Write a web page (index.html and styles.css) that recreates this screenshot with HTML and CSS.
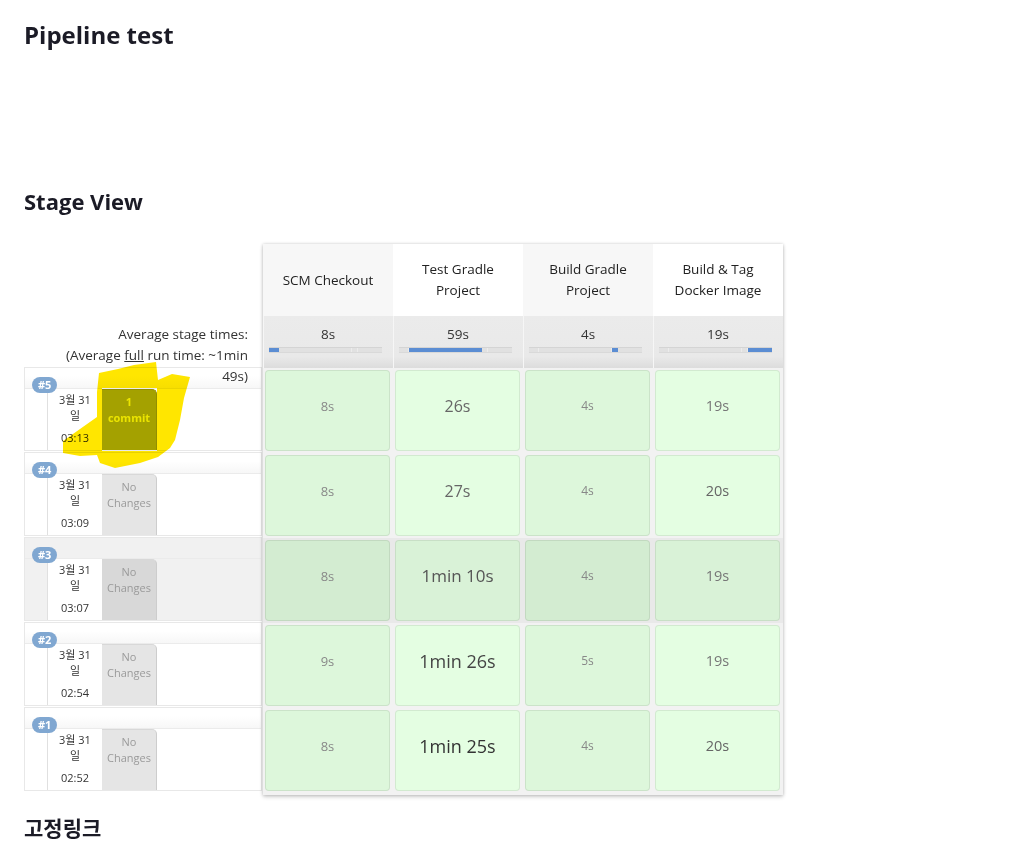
FILE: index.html
```html
<!DOCTYPE html>
<html lang="ko">
<head>
<meta charset="utf-8">
<title>Pipeline test</title>
<link rel="stylesheet" href="styles.css">
</head>
<body>
<h1 class="page-title">Pipeline test</h1>
<h2 class="section-title stage-title">Stage View</h2>
<div class="stage-view">
  <div class="runs">
    <div class="runs-head"></div>
    <div class="runs-avg">
      <div>Average stage times:</div>
      <div>(Average <u>full</u> run time: ~1min</div>
      <div>49s)</div>
    </div>
    <div class="run">
      <div class="run-top"><span class="badge">#5</span></div>
      <div class="run-body">
        <div class="run-date"><div class="date">3월 31<br>일</div><div class="time">03:13</div></div>
        <div class="changeset commit">1<br>commit</div>
      </div>
    </div>
    <div class="run">
      <div class="run-top"><span class="badge">#4</span></div>
      <div class="run-body">
        <div class="run-date"><div class="date">3월 31<br>일</div><div class="time">03:09</div></div>
        <div class="changeset">No<br>Changes</div>
      </div>
    </div>
    <div class="run hover">
      <div class="run-top"><span class="badge">#3</span></div>
      <div class="run-body">
        <div class="run-date"><div class="date">3월 31<br>일</div><div class="time">03:07</div></div>
        <div class="changeset">No<br>Changes</div>
      </div>
    </div>
    <div class="run">
      <div class="run-top"><span class="badge">#2</span></div>
      <div class="run-body">
        <div class="run-date"><div class="date">3월 31<br>일</div><div class="time">02:54</div></div>
        <div class="changeset">No<br>Changes</div>
      </div>
    </div>
    <div class="run">
      <div class="run-top"><span class="badge">#1</span></div>
      <div class="run-body">
        <div class="run-date"><div class="date">3월 31<br>일</div><div class="time">02:52</div></div>
        <div class="changeset">No<br>Changes</div>
      </div>
    </div>
  </div>

  <div class="stages">
    <div class="stage-row">
      <div class="stage-head odd">SCM Checkout</div>
      <div class="stage-head">Test Gradle Project</div>
      <div class="stage-head odd">Build Gradle Project</div>
      <div class="stage-head">Build &amp; Tag Docker Image</div>
    </div>
    <div class="stage-row">
      <div class="avg-cell">
        <div class="avg-time">8s</div>
        <div class="bar"><span class="seg on" style="width:10px"></span><span class="seg" style="width:73px"></span><span class="seg" style="width:6px"></span><span class="seg" style="width:24px"></span></div>
      </div>
      <div class="avg-cell">
        <div class="avg-time">59s</div>
        <div class="bar"><span class="seg" style="width:10px"></span><span class="seg on" style="width:73px"></span><span class="seg" style="width:6px"></span><span class="seg" style="width:24px"></span></div>
      </div>
      <div class="avg-cell">
        <div class="avg-time">4s</div>
        <div class="bar"><span class="seg" style="width:10px"></span><span class="seg" style="width:73px"></span><span class="seg on" style="width:6px"></span><span class="seg" style="width:24px"></span></div>
      </div>
      <div class="avg-cell">
        <div class="avg-time">19s</div>
        <div class="bar"><span class="seg" style="width:10px"></span><span class="seg" style="width:73px"></span><span class="seg" style="width:6px"></span><span class="seg on" style="width:24px"></span></div>
      </div>
    </div>

    <div class="stage-row build">
      <div class="cell"><div class="box ca t2">8s</div></div>
      <div class="cell"><div class="box cb t4">26s</div></div>
      <div class="cell"><div class="box ca t1">4s</div></div>
      <div class="cell"><div class="box cb t3">19s</div></div>
    </div>
    <div class="stage-row build">
      <div class="cell"><div class="box ca t2">8s</div></div>
      <div class="cell"><div class="box cb t4">27s</div></div>
      <div class="cell"><div class="box ca t1">4s</div></div>
      <div class="cell"><div class="box cb t3b">20s</div></div>
    </div>
    <div class="stage-row build hover">
      <div class="cell"><div class="box ca t2">8s</div></div>
      <div class="cell"><div class="box cb t5">1min 10s</div></div>
      <div class="cell"><div class="box ca t1">4s</div></div>
      <div class="cell"><div class="box cb t3">19s</div></div>
    </div>
    <div class="stage-row build">
      <div class="cell"><div class="box ca t2">9s</div></div>
      <div class="cell"><div class="box cb t6">1min 26s</div></div>
      <div class="cell"><div class="box ca t1">5s</div></div>
      <div class="cell"><div class="box cb t3">19s</div></div>
    </div>
    <div class="stage-row build">
      <div class="cell"><div class="box ca t2">8s</div></div>
      <div class="cell"><div class="box cb t7">1min 25s</div></div>
      <div class="cell"><div class="box ca t1">4s</div></div>
      <div class="cell"><div class="box cb t3b">20s</div></div>
    </div>
  </div>

  <svg class="scribble" width="152" height="112" viewBox="60 360 152 112" aria-hidden="true">
    <path fill-rule="evenodd" d="M99 373 L118 369 L134 365 L156 362 L158 380 L172 374 L190 377 L184 398 L180 420 L175 440 L170 448 L158 457 L140 463 L115 468 L100 463 L97 455 L80 456 L63 453 L63 441 L80 429 L97 417 L97 392 Z M102 388 L157 388 L157 451 L102 451 Z"/>
  </svg>
</div>
<h2 class="section-title link-title">고정링크</h2>
</body>
</html>
```

FILE: styles.css
```css
html, body {
  margin: 0;
  padding: 0;
  background: #fff;
}

body {
  padding: 0 24px;
  font-family: "Open Sans", "Noto Sans CJK KR", sans-serif;
  color: #333;
}

.page-title {
  margin: 19px 0 0;
  font-size: 24px;
  line-height: 32px;
  font-weight: 700;
  color: #1b1b26;
}

.section-title {
  margin: 0;
  font-size: 22px;
  line-height: 28px;
  font-weight: 700;
  color: #1b1b26;
}

.stage-title {
  margin-top: 136px;
}

.link-title {
  margin-top: 18px;
  font-family: "Noto Sans CJK KR", "Open Sans", sans-serif;
  font-size: 21px;
}

.stage-view {
  position: relative;
  display: flex;
  align-items: flex-start;
  margin-top: 29px;
}

/* left column */
.runs {
  width: 238px;
  flex: none;
}

.runs-head {
  height: 72px;
}

.runs-avg {
  height: 51px;
  box-sizing: border-box;
  padding: 8px 14px 0 0;
  text-align: right;
  font-size: 13.5px;
  line-height: 21px;
  color: #333;
  white-space: nowrap;
}

.run {
  height: 84px;
  box-sizing: border-box;
  border: 1px solid #e8e8e8;
  margin-bottom: 1px;
  background: #fff;
}

.run.hover {
  background: #f1f1f1;
}

.run-top {
  height: 20px;
  border-bottom: 1px solid #ebebeb;
  background: linear-gradient(#ffffff 40%, #f7f7f7);
}

.run.hover .run-top {
  background: none;
}

.badge {
  position: relative;
  z-index: 1;
  display: inline-block;
  margin: 9px 0 0 7px;
  height: 16px;
  padding: 0 6px;
  border-radius: 8px;
  background: #80a7d1;
  color: #fff;
  font-size: 11px;
  line-height: 16px;
  font-weight: 700;
}

.run-body {
  display: flex;
  height: 61px;
  margin-left: 22px;
}

.run-date {
  width: 55px;
  box-sizing: border-box;
  border-left: 1px solid #e0e0e0;
  background: #fff;
  text-align: center;
  font-size: 11px;
  line-height: 16px;
  padding-top: 3px;
  color: #333;
}

.run-date .time {
  margin-top: 6px;
}

.changeset {
  width: 55px;
  box-sizing: border-box;
  padding-top: 4px;
  background: #e5e5e5;
  border-top: 1px solid #d8d8d8;
  border-right: 1px solid #cdcdcd;
  border-top-right-radius: 5px;
  text-align: center;
  font-size: 11px;
  line-height: 16px;
  color: #9a9a9a;
}

.run.hover .changeset {
  background: #d8d8d8;
}

.changeset.commit {
  background: #a4a100;
  border-color: #918e00;
  color: #ebe400;
  font-weight: 700;
}

/* stage table */
.stages {
  width: 520px;
  flex: none;
  margin-left: 1px;
  padding-bottom: 2px;
  background: #f2f2f2;
  box-shadow: 0 0 3px rgba(0, 0, 0, 0.18), 0 2px 4px rgba(0, 0, 0, 0.18);
}

.stage-row {
  display: flex;
}

.stage-head {
  width: 130px;
  height: 72px;
  box-sizing: border-box;
  padding: 0 10px;
  display: flex;
  align-items: center;
  justify-content: center;
  text-align: center;
  font-size: 13.5px;
  line-height: 21px;
  color: #222;
  background: #fff;
}

.stage-head.odd {
  background: #f7f7f7;
}

.avg-cell {
  width: 130px;
  height: 52px;
  box-sizing: border-box;
  padding-top: 8px;
  background: linear-gradient(#ebebeb 0, #e9e9e9 78%, #dcdcdc 100%);
  box-shadow: inset 1px 0 0 #f6f6f6;
  text-align: center;
  font-size: 13.5px;
  line-height: 20px;
  color: #333;
}

.bar {
  display: flex;
  width: 113px;
  height: 4px;
  margin: 3px 0 0 6px;
  background: #e1e1e1;
  border-top: 1px solid #d4d4d4;
  border-bottom: 1px solid #d9d9d9;
}

.seg {
  display: block;
  height: 100%;
  box-sizing: border-box;
  border-right: 1px solid #ececec;
}

.seg:last-child {
  border-right: 0;
}

.seg.on {
  background: #5b8dd3;
  border-right-color: #5b8dd3;
}

.build {
  height: 85px;
}

.build.hover {
  background: #e9e9e9;
}

.cell {
  width: 130px;
  box-sizing: border-box;
  padding: 2px 3px 2px 2px;
}

.box {
  height: 81px;
  box-sizing: border-box;
  border: 1px solid rgba(0, 0, 0, 0.08);
  border-radius: 4px;
  padding-top: 25px;
  line-height: 20px;
  text-align: center;
  white-space: nowrap;
}

.box.ca { background: #ddf7db; }
.box.cb { background: #e4fee2; }
.hover .box.ca { background: #d3ecd1; }
.hover .box.cb { background: #d9f2d7; }

.t1 { font-size: 12px; color: #888; }
.t2 { font-size: 13px; color: #888; }
.t3 { font-size: 14.5px; color: #777; }
.t3b { font-size: 14.5px; color: #666; }
.t4 { font-size: 16px; color: #666; }
.t5 { font-size: 17px; color: #555; }
.t6 { font-size: 18px; color: #444; }
.t7 { font-size: 18px; color: #333; }

.scribble {
  position: absolute;
  left: 36px;
  top: 116px;
  fill: #ffe600;
  mix-blend-mode: multiply;
  pointer-events: none;
}
```
